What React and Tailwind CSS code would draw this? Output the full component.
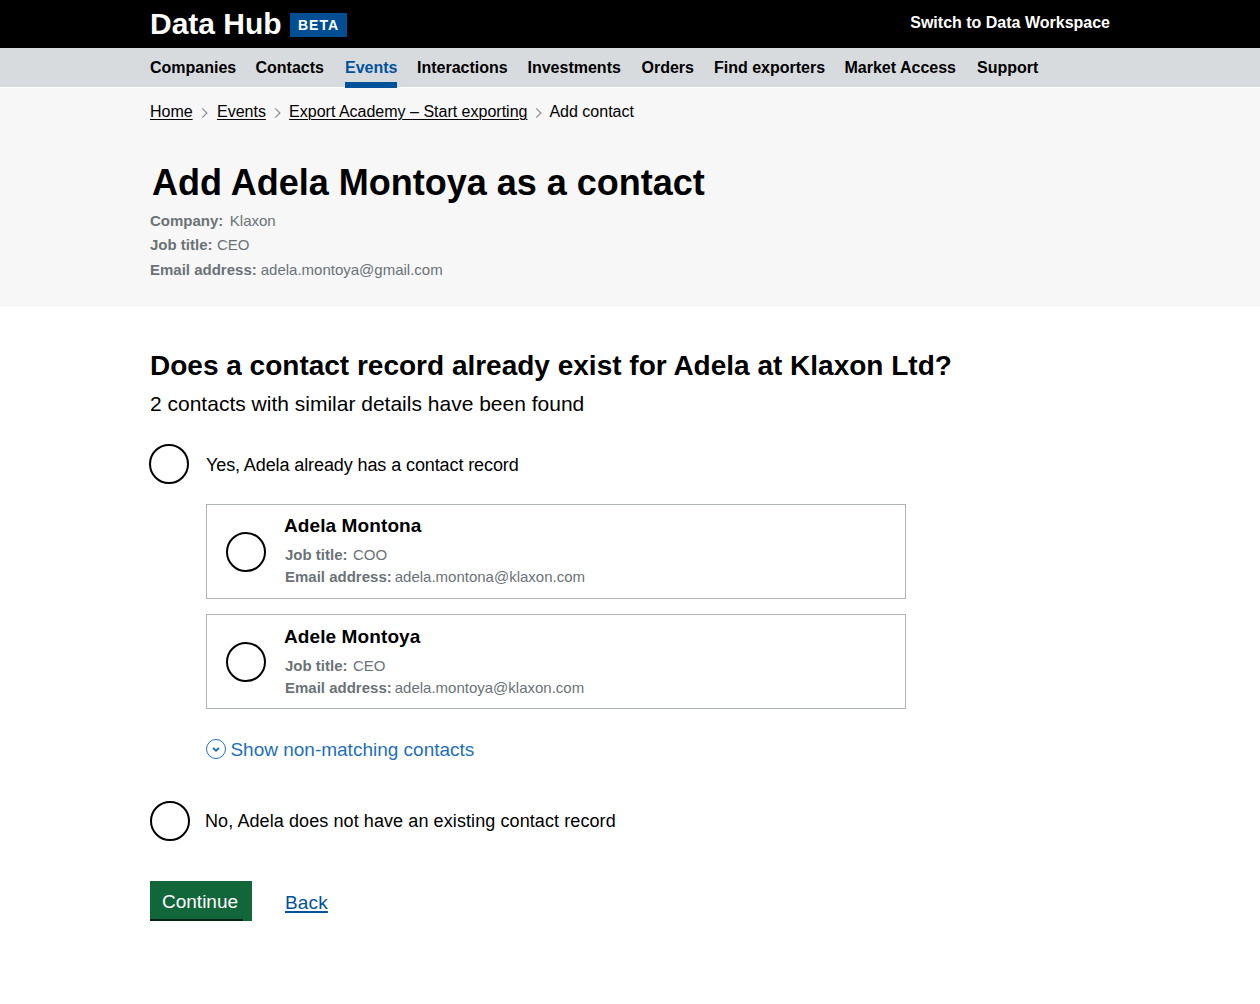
import React from "react";

const NAV = [
  { label: "Companies", width: "w-[105.5px]" },
  { label: "Contacts", width: "w-[89.5px]" },
  { label: "Events", width: "w-[72px]", active: true },
  { label: "Interactions", width: "w-[110.5px]" },
  { label: "Investments", width: "w-[114px]" },
  { label: "Orders", width: "w-[72.5px]" },
  { label: "Find exporters", width: "w-[130.5px]" },
  { label: "Market Access", width: "w-[132.5px]" },
  { label: "Support", width: "w-[62px]" },
];

function Chevron() {
  return (
    <svg width="8" height="12" viewBox="0 0 8 12" className="mt-px shrink-0" fill="none" stroke="#8a8f92" strokeWidth="1.2">
      <path d="M1.2 1.3 5.9 6 1.2 10.7" />
    </svg>
  );
}

function Crumb({ children }) {
  return (
    <a className="underline decoration-1 underline-offset-2 whitespace-nowrap">{children}</a>
  );
}

function Radio() {
  return <span className="size-10 shrink-0 rounded-full border-2 border-black bg-white" />;
}

function Detail({ label, value, gap = "gap-1" }) {
  return (
    <div className={`flex ${gap} text-[15px] text-[#6b7276]`}>
      <span className="font-bold">{label}</span>
      <span>{value}</span>
    </div>
  );
}

function ContactCard({ name, job, email, top }) {
  return (
    <div className="flex h-[95px] w-[700px] border border-[#b1b4b6] pl-[19px]">
      <div className="mt-[27px] flex h-10">
        <Radio />
      </div>
      <div className={`ml-[18px] ${top}`}>
        <h3 className="text-[19px] leading-[22px] font-bold tracking-[0.1px]">{name}</h3>
        <div className="mt-[7px] pl-px leading-[22px]">
          <Detail label="Job title:" value={job} gap="gap-[5.5px]" />
          <Detail label="Email address:" value={email} gap="gap-[3px]" />
        </div>
      </div>
    </div>
  );
}

export default function App() {
  return (
    <div className="h-[1004px] w-[1260px] overflow-hidden bg-white font-['Liberation_Sans',Arial,sans-serif] text-black">
      <header className="h-12 bg-black px-[150px] text-white">
        <div className="flex justify-between">
          <div className="flex">
            <span className="text-[30px] leading-[48px] font-bold">Data Hub</span>
            <span className="mt-[13px] ml-[8.3px] h-6 w-[57px] bg-[#004e93] pl-2 text-[14px] leading-6 font-bold tracking-[1px]">
              BETA
            </span>
          </div>
          <a className="mt-[11px] text-base leading-6 font-bold">Switch to Data Workspace</a>
        </div>
      </header>

      <nav className="flex h-10 border-b border-white bg-[#d8dbde] pl-[150px] text-base font-bold">
        {NAV.map(({ label, width, active }) => (
          <div key={label} className={`${width} h-10 whitespace-nowrap`}>
            {active ? (
              <a className="flex h-10 w-[52px] flex-col border-b-6 border-[#00539b] leading-10 text-[#00539b]">{label}</a>
            ) : (
              <a className="leading-10">{label}</a>
            )}
          </div>
        ))}
      </nav>

      <section className="h-[219px] bg-[#f7f7f7] px-[150px] pt-3">
        <div className="flex h-6 items-center text-base leading-6">
          <Crumb>Home</Crumb>
          <span className="mr-[8.3px] ml-[8px]"><Chevron /></span>
          <Crumb>Events</Crumb>
          <span className="mr-[7px] ml-[8.2px]"><Chevron /></span>
          <Crumb>Export Academy – Start exporting</Crumb>
          <span className="mr-[6.6px] ml-[7.4px]"><Chevron /></span>
          <span>Add contact</span>
        </div>
        <h1 className="mt-[39px] pl-[2px] text-4xl leading-[40px] font-bold">Add Adela Montoya as a contact</h1>
        <div className="mt-[6px] leading-6">
          <Detail label="Company:" value="Klaxon" gap="gap-[6.5px]" />
          <Detail label="Job title:" value="CEO" gap="gap-[4.5px]" />
          <div className="pt-px">
            <Detail label="Email address:" value="adela.montoya@gmail.com" />
          </div>
        </div>
      </section>

      <main className="px-[150px] pt-[43px]">
        <h2 className="text-[28px] leading-8 font-bold">Does a contact record already exist for Adela at Klaxon Ltd?</h2>
        <p className="mt-[10px] text-[21px] leading-6">2 contacts with similar details have been found</p>

        <label className="mt-7 -ml-px flex h-10 items-center">
          <Radio />
          <span className="mt-[2px] ml-[17px] text-lg tracking-[-0.1px]">Yes, Adela already has a contact record</span>
        </label>

        <div className="mt-5 ml-14 flex flex-col gap-[15px]">
          <ContactCard name="Adela Montona" job="COO" email="adela.montona@klaxon.com" top="pt-[10px]" />
          <ContactCard name="Adele Montoya" job="CEO" email="adela.montoya@klaxon.com" top="pt-[11px]" />
        </div>

        <a className="mt-[30px] ml-14 flex h-5 items-center text-[19px] leading-5 text-[#1d70b8]">
          <svg width="20" height="20" viewBox="0 0 20 20" fill="none" stroke="#1d70b8">
            <circle cx="10" cy="10" r="9.5" />
            <path d="M7 9 10 11.8 13 9" strokeWidth="1.9" />
          </svg>
          <span className="mt-px ml-[4.4px]">Show non-matching contacts</span>
        </a>

        <label className="mt-[42px] flex h-10 items-center">
          <Radio />
          <span className="ml-[15px] text-lg tracking-[0.09px]">No, Adela does not have an existing contact record</span>
        </label>

        <div className="mt-10 flex">
          <button className="flex h-10 w-[102px] flex-col bg-[#11663a] text-left text-[19px] text-white">
            <span className="h-[38px] pt-px pl-3 leading-10">Continue</span>
            <span className="h-[2px] w-[93px] bg-[#002413]" />
          </button>
          <a className="mt-[2px] ml-[33px] text-[19px] leading-10 tracking-[0.15px] text-[#00539b] underline decoration-[1.5px] underline-offset-2">Back</a>
        </div>
      </main>
    </div>
  );
}
